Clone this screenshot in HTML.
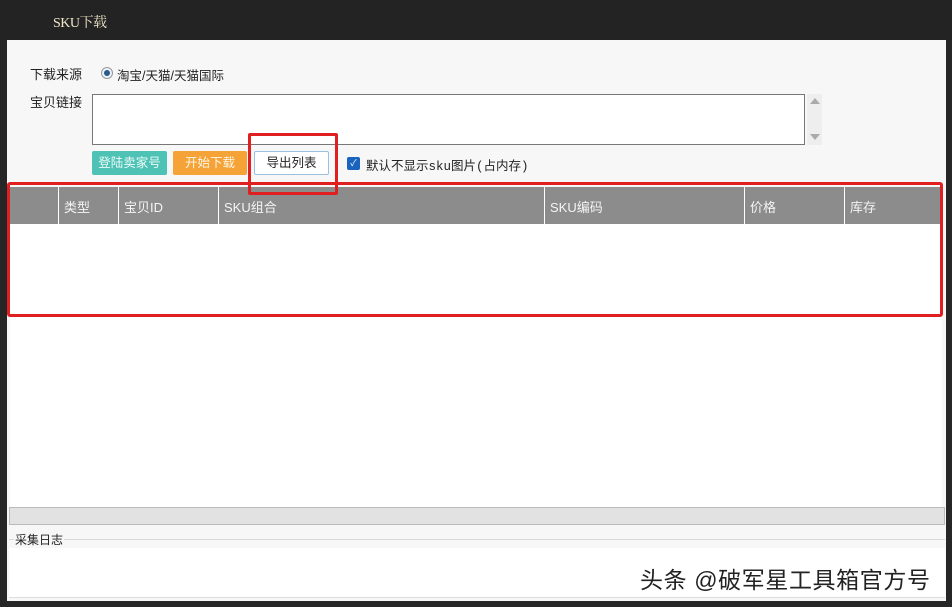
<!DOCTYPE html>
<html><head><meta charset="utf-8"><style>
*{margin:0;padding:0;box-sizing:border-box}
body{width:952px;height:607px;background:#262626;position:relative;overflow:hidden;font-family:"Liberation Sans","Noto Sans CJK SC",sans-serif;font-size:13px;color:#222}
.a{position:absolute}
</style></head><body>
<div class="a" style="left:0;top:0;width:952px;height:40px;background:#232323"></div>
<div class="a" style="left:53px;top:12px;color:#f0e8c8;font-family:'Liberation Serif','Noto Serif CJK SC',serif;font-size:14px;letter-spacing:-0.5px">SKU下载</div>
<div class="a" style="left:7px;top:40px;width:939px;height:561px;background:#f7f7f7"></div>
<div class="a" style="left:30px;top:64px">下载来源</div>
<div class="a" style="left:101px;top:67px;width:12px;height:12px;border-radius:50%;border:1px solid #999;background:#eaf2fa"><div style="margin:2px;width:6px;height:6px;border-radius:50%;background:#2a5a8a"></div></div>
<div class="a" style="left:117px;top:65px;font-size:12.5px">淘宝/天猫/天猫国际</div>
<div class="a" style="left:30px;top:92px">宝贝链接</div>
<div class="a" style="left:92px;top:94px;width:713px;height:51px;background:#fff;border:1px solid #777"></div>
<div class="a" style="left:807px;top:94px;width:15px;height:51px;background:#eee"></div>
<div class="a" style="left:810px;top:98px;width:0;height:0;border-left:5px solid transparent;border-right:5px solid transparent;border-bottom:6px solid #aaa"></div>
<div class="a" style="left:810px;top:134px;width:0;height:0;border-left:5px solid transparent;border-right:5px solid transparent;border-top:6px solid #aaa"></div>
<div class="a" style="left:92px;top:151px;width:75px;height:24px;background:#4ec2b4;border-radius:2px;color:#eafaf8;text-align:center;line-height:24px;font-size:12.5px">登陆卖家号</div>
<div class="a" style="left:173px;top:151px;width:74px;height:24px;background:#f5a237;border-radius:2px;color:#fff6e6;text-align:center;line-height:24px;font-size:12.5px">开始下载</div>
<div class="a" style="left:254px;top:151px;width:75px;height:24px;background:#fff;border:1px solid #9cc0e0;border-radius:2px;text-align:center;line-height:22px;font-size:12.5px">导出列表</div>
<div class="a" style="left:347px;top:157px;width:13px;height:13px;background:#1a64c0;border-radius:2px;color:#fff;font-size:9px;line-height:13px;text-align:center">✓</div>
<div class="a" style="left:366px;top:155px;font-size:12.5px;font-family:'Liberation Mono','Noto Sans CJK SC',monospace">默认不显示sku图片(占内存)</div>
<div class="a" style="left:10px;top:187px;width:932px;height:37px;background:#8c8c8c"></div>
<div class="a" style="left:10px;top:224px;width:932px;height:283px;background:#fff"></div>
<div class="a" style="left:58px;top:187px;width:1px;height:37px;background:#fff"></div>
<div class="a" style="left:118px;top:187px;width:1px;height:37px;background:#fff"></div>
<div class="a" style="left:218px;top:187px;width:1px;height:37px;background:#fff"></div>
<div class="a" style="left:544px;top:187px;width:1px;height:37px;background:#fff"></div>
<div class="a" style="left:744px;top:187px;width:1px;height:37px;background:#fff"></div>
<div class="a" style="left:844px;top:187px;width:1px;height:37px;background:#fff"></div>
<div class="a" style="left:64px;top:197px;color:#f4f4f4">类型</div>
<div class="a" style="left:124px;top:197px;color:#f4f4f4">宝贝ID</div>
<div class="a" style="left:224px;top:197px;color:#f4f4f4">SKU组合</div>
<div class="a" style="left:550px;top:197px;color:#f4f4f4">SKU编码</div>
<div class="a" style="left:750px;top:197px;color:#f4f4f4">价格</div>
<div class="a" style="left:850px;top:197px;color:#f4f4f4">库存</div>
<div class="a" style="left:9px;top:507px;width:936px;height:18px;background:#e2e2e2;border:1px solid #bbb"></div>
<div class="a" style="left:9px;top:539px;width:936px;height:1px;background:#d8d8d8"></div>
<div class="a" style="left:14px;top:531px;background:#f7f7f7;padding:0 1px;font-size:12px">采集日志</div>
<div class="a" style="left:9px;top:548px;width:936px;height:50px;background:#fff;border-bottom:1px solid #ddd"></div>
<div class="a" style="left:640px;top:561px;font-size:23px;color:#222;letter-spacing:0.6px;white-space:nowrap">头条 @破军星工具箱官方号</div>
<div class="a" style="left:248px;top:133px;width:90px;height:62px;border:3px solid #e02020;border-radius:2px"></div>
<div class="a" style="left:7px;top:182px;width:936px;height:135px;border:3px solid #e02020;border-radius:3px"></div>
</body></html>
